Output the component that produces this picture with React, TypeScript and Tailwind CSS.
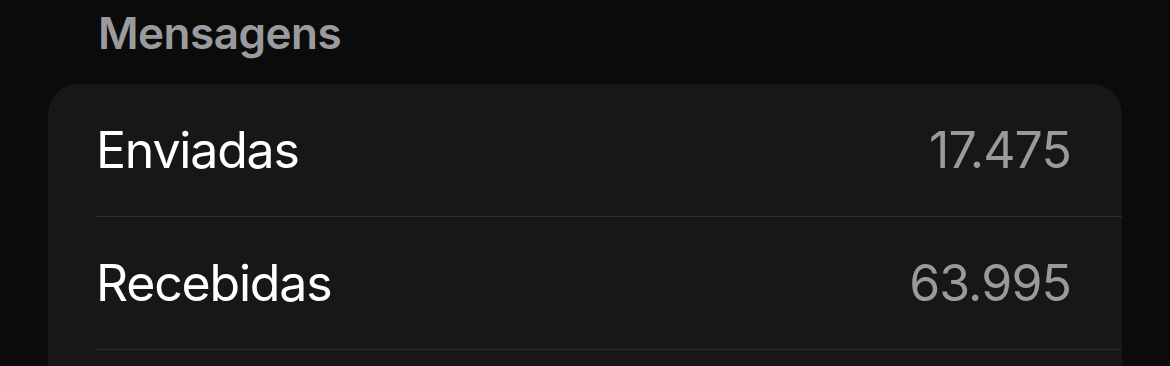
import React from "react";

const rows = [
  { label: "Enviadas", value: "17.475" },
  { label: "Recebidas", value: "63.995" },
];

export default function App() {
  return (
    <div
      className="w-[1170px] h-[366px] overflow-hidden bg-[#0b0b0b] pl-[48px] pr-[48px]"
      style={{ fontFamily: "Inter, 'Noto Sans', sans-serif" }}
    >
      <div className="pt-[11px] pl-[50px] text-[44px] leading-[44px] font-semibold text-[#9b9b9f] tracking-[-0.5px]">
        Mensagens
      </div>
      <div className="mt-[29px] rounded-t-[30px] bg-[#171717] pl-[48px]">
        {rows.map((r) => (
          <div key={r.label} className="border-b border-[#2c2c2e]">
            <div className="h-[132px] flex items-center justify-between pr-[51px]">
              <span className="text-[50px] text-white tracking-[-1.2px]">{r.label}</span>
              <span className="text-[50px] text-[#9a9a9e] tracking-[-0.9px]">{r.value}</span>
            </div>
          </div>
        ))}
        <div className="h-[60px]" />
      </div>
    </div>
  );
}
